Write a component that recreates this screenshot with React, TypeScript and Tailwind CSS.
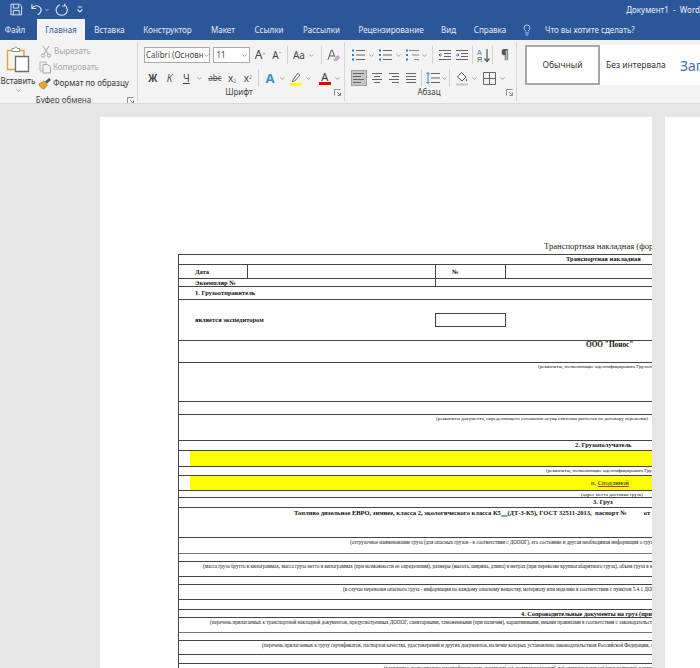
import React from 'react';
import { ChevronDown, Lightbulb } from 'lucide-react';

const tabs = [
  { label: 'Файл', w: 'w-[30px]' },
  { label: 'Главная', w: 'w-[48px]', active: true },
  { label: 'Вставка', w: 'w-[49px]' },
  { label: 'Конструктор', w: 'w-[67px]' },
  { label: 'Макет', w: 'w-[44px]' },
  { label: 'Ссылки', w: 'w-[48px]' },
  { label: 'Рассылки', w: 'w-[57px]' },
  { label: 'Рецензирование', w: 'w-[82px]' },
  { label: 'Вид', w: 'w-[33px]' },
  { label: 'Справка', w: 'w-[50px]' },
];

const Chev = ({ className = '' }: { className?: string }) => (
  <ChevronDown className={`w-[7px] h-[7px] text-[#666] ${className}`} strokeWidth={2} />
);

const Vr = ({ className = '' }: { className?: string }) => <div className={`w-px h-[18px] bg-[#d2d2d2] ${className}`} />;

// paragraph style glyph: horizontal lines given as [x1, x2]
const Lines = ({ rows, color = '#666', extra }: { rows: number[][]; color?: string; extra?: React.ReactNode }) => (
  <svg width="14" height="14" viewBox="0 0 14 14" className="shrink-0">
    {rows.map((r, i) => (
      <line key={i} x1={r[0]} x2={r[1]} y1={2.5 + (i * 9) / Math.max(rows.length - 1, 1)} y2={2.5 + (i * 9) / Math.max(rows.length - 1, 1)} stroke={color} strokeWidth="1" />
    ))}
    {extra}
  </svg>
);

const Launcher = () => (
  <svg width="7" height="7" viewBox="0 0 7 7" className="shrink-0">
    <path d="M0.5 6.5V0.5H6.5M3 3L6.5 6.5M6.5 3.5V6.5H3.5" fill="none" stroke="#777" strokeWidth="0.8" />
  </svg>
);

const GroupLabel = ({ label }: { label: string }) => (
  <div className="flex items-center justify-between h-[14px] mt-auto mb-[3px]">
    <div className="flex-1 text-center text-[8px] text-[#444] whitespace-nowrap">{label}</div>
    <Launcher />
  </div>
);

const Clipboard = () => (
  <div className="mt-[4px]">
    <svg width="24" height="28" viewBox="0 0 24 28">
      <path d="M1.5 4.5H18V10M1.5 4.5V23.5H9" fill="#fbf3e3" stroke="#d9a441" strokeWidth="1.4" />
      <path d="M6 5.5V2.5H8C8.5 .5 11 .5 11.5 2.5H13.5V5.5Z" fill="#fff" stroke="#8a8a8a" strokeWidth="1" />
      <path d="M9.5 10.5H22.5V25.5H9.5Z" fill="#fff" stroke="#6f6f6f" strokeWidth="1.3" />
    </svg>
  </div>
);

const ClipboardGroup = () => (
  <div className="w-[138px] shrink-0 border-r border-[#d6d6d6] flex flex-col pr-[3px] my-[2px]">
    <div className="flex">
      <div className="w-[36px] flex flex-col items-center">
        <Clipboard />
        <div className="text-[8px] leading-[11px] mt-[1px] text-[#333] whitespace-nowrap">Вставить</div>
        <Chev className="mt-[1px]" />
      </div>
      <div className="flex flex-col ml-[2px] mt-[1px] text-[8px] leading-[16px] whitespace-nowrap">
        <div className="flex items-center h-[16px] text-[#a8a8a8]">
          <svg width="12" height="13" viewBox="0 0 12 13" className="ml-[2px] mr-[2px]">
            <path d="M3 1L8 9M9 1L4 9" fill="none" stroke="#a5a5a5" strokeWidth="1" />
            <circle cx="3" cy="10.5" r="1.6" fill="none" stroke="#8fa6c4" />
            <circle cx="9" cy="10.5" r="1.6" fill="none" stroke="#8fa6c4" />
          </svg>
          Вырезать
        </div>
        <div className="flex items-center h-[16px] text-[#a8a8a8]">
          <svg width="13" height="13" viewBox="0 0 13 13" className="ml-[1px] mr-[1px]">
            <path d="M1 1H7V10H1Z" fill="none" stroke="#b0b0b0" />
            <path d="M4 3.5H8.5L11.5 6V12H4Z" fill="#f3f3f3" stroke="#a5a5a5" />
          </svg>
          Копировать
        </div>
        <div className="flex items-center h-[16px] text-[#333]">
          <svg width="14" height="13" viewBox="0 0 14 13" className="mr-[1px]">
            <path d="M1 7L6 4L9.5 8L6 12C4 12 1.5 10 1 7Z" fill="#e8a33d" stroke="#b5721f" strokeWidth="0.7" />
            <path d="M7 4.5L11 1L13 3L9 6.5Z" fill="#555" />
          </svg>
          Формат по образцу
        </div>
      </div>
    </div>
    <GroupLabel label="Буфер обмена" />
  </div>
);

const FontGroup = () => (
  <div className="w-[207px] shrink-0 border-r border-[#d6d6d6] flex flex-col pl-[6px] pr-[3px] my-[2px] text-[#444]">
    <div className="flex items-center mt-[5px] h-[16px]">
      <div className="w-[68px] h-[16px] bg-white border border-[#aaa] flex items-center pl-[1px] overflow-hidden">
        <span className="text-[8px] whitespace-nowrap w-[57px] overflow-hidden">Calibri (Основн</span>
        <Chev />
      </div>
      <div className="w-[37px] h-[16px] ml-[3px] bg-white border border-[#aaa] flex items-center justify-between pl-[2px] pr-[1px]">
        <span className="text-[8px]">11</span>
        <Chev />
      </div>
      <span className="ml-[5px] text-[12px] leading-none w-[18px]">A<sup className="text-[6px] text-[#4a7ab5]">^</sup></span>
      <span className="text-[10px] leading-none w-[15px]">A<sup className="text-[6px] text-[#4a7ab5]">ˇ</sup></span>
      <Vr />
      <span className="ml-[5px] text-[10px] w-[15px]">Aa</span>
      <Chev />
      <Vr className="ml-[7px]" />
      <svg width="14" height="14" viewBox="0 0 14 14" className="ml-[5px]">
        <path d="M1 12L4.5 2H5.5L8 9M2.5 8H7" fill="none" stroke="#555" />
        <path d="M7 12L11 7.5L13 9.5L10 12.5H7.5Z" fill="#d9a8e0" stroke="#a55bb5" strokeWidth="0.6" />
      </svg>
    </div>
    <div className="flex items-center mt-[7px] h-[16px]">
      <span className="w-[14px] ml-[2px] text-center text-[10px] font-bold font-['Liberation_Sans',sans-serif]">Ж</span>
      <span className="w-[20px] text-center text-[10px] italic text-[#555]">К</span>
      <span className="w-[14px] text-center text-[10px] underline">Ч</span>
      <Chev className="ml-[3px]" />
      <span className="w-[20px] ml-[2px] text-center text-[8px] text-[#555] line-through">abc</span>
      <span className="w-[15px] text-center text-[10px]">x<sub className="text-[5px] text-[#4a7ab5]">2</sub></span>
      <span className="w-[17px] text-center text-[10px]">x<sup className="text-[5px] text-[#4a7ab5]">2</sup></span>
      <Vr className="ml-[2px]" />
      <span className="w-[18px] ml-[2px] text-center text-[13px] leading-none font-bold text-[#3f8fd6]">A</span>
      <Chev />
      <svg width="14" height="15" viewBox="0 0 14 15" className="ml-[3px]">
        <path d="M4 9L9 2L11 4L6 10L3.5 10.5Z" fill="#fff" stroke="#666" />
        <rect x="1" y="12" width="12" height="3" fill="#ffff00" />
      </svg>
      <Chev className="ml-[3px]" />
      <div className="ml-[6px] w-[13px] flex flex-col items-center">
        <span className="text-[11px] leading-[11px] text-[#333]">A</span>
        <div className="w-[12px] h-[3px] bg-[#e00000]" />
      </div>
      <Chev className="ml-[3px]" />
    </div>
    <GroupLabel label="Шрифт" />
  </div>
);

const bullets = (
  <g fill="#2b7cd3">
    <rect x="0" y="1.5" width="2" height="2" />
    <rect x="0" y="6" width="2" height="2" />
    <rect x="0" y="10.5" width="2" height="2" />
  </g>
);

const ParagraphGroup = () => (
  <div className="w-[172px] shrink-0 border-r border-[#d6d6d6] flex flex-col pl-[7px] pr-[3px] my-[2px]">
    <div className="flex items-center mt-[5px] h-[16px]">
      <Lines rows={[[4, 13], [4, 13], [4, 13]]} extra={bullets} />
      <Chev className="ml-[2px]" />
      <div className="ml-[4px]"><Lines rows={[[4, 13], [4, 13], [4, 13]]} extra={bullets} /></div>
      <Chev className="ml-[2px]" />
      <div className="ml-[4px]"><Lines rows={[[3, 13], [6, 13], [8, 13]]} color="#888" extra={bullets} /></div>
      <Chev className="ml-[1px]" />
      <Vr className="ml-[4px]" />
      <div className="ml-[5px]"><Lines rows={[[1, 13], [6, 13], [6, 13], [1, 13]]} extra={<path d="M4 7H1M2.5 5.5L1 7L2.5 8.5" fill="none" stroke="#2b7cd3" />} /></div>
      <div className="ml-[3px]"><Lines rows={[[1, 13], [6, 13], [6, 13], [1, 13]]} extra={<path d="M1 7H4M2.5 5.5L4 7L2.5 8.5" fill="none" stroke="#2b7cd3" />} /></div>
      <Vr className="ml-[3px]" />
      <svg width="14" height="15" viewBox="0 0 14 15" className="ml-[3px]">
        <path d="M11 1V13M8.5 10.5L11 13.5L13.5 10.5" fill="none" stroke="#555" strokeWidth="1.2" />
        <text x="1" y="6.5" fontSize="7" fill="#2b7cd3" fontFamily="Liberation Sans, sans-serif">А</text>
        <text x="1" y="13.5" fontSize="7" fill="#555" fontFamily="Liberation Sans, sans-serif">Я</text>
      </svg>
      <Vr className="ml-[2px]" />
      <span className="ml-[8px] text-[12px] font-bold leading-none text-[#555]">¶</span>
    </div>
    <div className="flex items-center mt-[7px] h-[16px] -ml-[1px]">
      <div className="w-[16px] h-[16px] bg-[#c6c6c6] border border-[#a0a0a0] flex items-center justify-center">
        <Lines rows={[[1, 12], [1, 9], [1, 12], [1, 9]]} />
      </div>
      <div className="ml-[3px]"><Lines rows={[[2, 12], [4, 10], [2, 12], [4, 10]]} /></div>
      <div className="ml-[3px]"><Lines rows={[[2, 12], [5, 12], [2, 12], [5, 12]]} /></div>
      <div className="ml-[3px]"><Lines rows={[[2, 12], [2, 12], [2, 12], [2, 12]]} /></div>
      <Vr className="ml-[3px]" />
      <div className="ml-[4px]"><Lines rows={[[5, 14], [5, 14], [5, 14]]} extra={<path d="M2 1.5V12.5M.5 3L2 1.5L3.5 3M.5 11L2 12.5L3.5 11" fill="none" stroke="#2b7cd3" />} /></div>
      <Chev className="ml-[1px]" />
      <Vr className="ml-[1px]" />
      <svg width="14" height="15" viewBox="0 0 14 15" className="ml-[5px]">
        <path d="M6.5 1.5L11 6L7 10L2.5 6Z" fill="#fff" stroke="#555" />
        <path d="M11.5 7.5C12.5 9 12.5 10 11.5 10C10.5 10 10.5 9 11.5 7.5Z" fill="#555" />
        <rect x="1" y="12.5" width="12" height="2" fill="#c8c8c8" />
      </svg>
      <Chev className="ml-[2px]" />
      <svg width="13" height="13" viewBox="0 0 13 13" className="ml-[5px]">
        <path d="M.5 .5H12.5V12.5H.5ZM6.5 .5V12.5M.5 6.5H12.5" fill="none" stroke="#666" />
      </svg>
      <Chev className="ml-[3px]" />
    </div>
    <GroupLabel label="Абзац" />
  </div>
);

const StylesGroup = () => (
  <div className="flex items-start ml-[8px] mt-[5px] text-[#333]">
    <div className="w-[75px] h-[40px] bg-white border-2 border-[#a9a9a9] flex items-center justify-center text-[8.5px]">Обычный</div>
    <div className="w-[80px] h-[40px] bg-white flex items-center pl-[6px] text-[8.5px] whitespace-nowrap">Без интервала</div>
    <div className="w-[30px] h-[40px] bg-white flex items-center text-[14px] text-[#4472a8] whitespace-nowrap overflow-hidden">Заг</div>
  </div>
);

type Row = { h: number; x?: number; text?: string; size?: number; bold?: boolean; yellow?: boolean; center?: boolean; body?: string; thick?: boolean };

const rows: Row[] = [
  { h: 10, x: 388, text: 'Транспортная накладная', size: 6.5, bold: true },
  { h: 14, body: 'date' },
  { h: 8, body: 'copy' },
  { h: 13, x: 17, text: '1. Грузоотправитель', size: 6.5, bold: true, center: true },
  { h: 41, body: 'forwarder' },
  { h: 22, x: 408, text: 'ООО "Понос"', size: 7.3, bold: true },
  { h: 39, x: 360, text: '(реквизиты, позволяющие идентифицировать Грузоотправителя)', size: 5 },
  { h: 13 },
  { h: 26, x: 258, text: '(реквизиты документа, определяющего основания осуществления расчетов по договору перевозки)', size: 5 },
  { h: 10, x: 397, text: '2. Грузополучатель', size: 6.5, bold: true },
  { h: 16, yellow: true },
  { h: 9, x: 368, text: '(реквизиты, позволяющие идентифицировать Грузополучателя)', size: 5 },
  { h: 15, yellow: true, body: 'address' },
  { h: 7, x: 403, text: '(адрес места доставки груза)', size: 5 },
  { h: 10, x: 415, text: '3. Груз', size: 6.5, bold: true },
  { h: 30, body: 'cargo' },
  { h: 16, x: 172, text: '(отгрузочное наименование груза (для опасных грузов - в соответствии с ДОПОГ), его состояние и другая необходимая информация о грузе)', size: 5.1 },
  { h: 8, thick: true },
  { h: 15, x: 25, text: '(масса груза брутто в килограммах, масса груза нетто в килограммах (при возможности ее определения), размеры (высота, ширина, длина) в метрах (при перевозке крупногабаритного груза), объем груза в кубических метрах', size: 5.1 },
  { h: 8 },
  { h: 15, x: 165, text: '(в случае перевозки опасного груза - информация по каждому опасному веществу, материалу или изделию в соответствии с пунктом 5.4.1 ДОПОГ)', size: 5.1 },
  { h: 10 },
  { h: 8, x: 343, text: '4. Сопроводительные документы на груз (при наличии)', size: 6.3, bold: true },
  { h: 15, x: 32, text: '(перечень прилагаемых к транспортной накладной документов, предусмотренных ДОПОГ, санитарными, таможенными (при наличии), карантинными, иными правилами в соответствии с законодательством Российской Федерации)', size: 5.1 },
  { h: 8, thick: true },
  { h: 14, x: 84, text: '(перечень прилагаемых к грузу сертификатов, паспортов качества, удостоверений и других документов, наличие которых установлено законодательством Российской Федерации, либо регистрационные номера)', size: 5.1 },
  { h: 9 },
  { h: 20, x: 206, text: '(реквизиты, позволяющие идентифицировать документ(-ы), подтверждающий(-ие) отгрузку товаров) (при наличии), реквизиты сертификата', size: 5.1 },
];

const cellText = 'text-[6.5px] font-bold leading-[8px]';

const renderBody = (r: Row) => {
  if (r.body === 'date')
    return (
      <div className="flex h-full items-center">
        <div className={`w-[68px] pl-[16px] h-full flex items-center ${cellText}`}>Дата</div>
        <div className="w-[188px] h-full border-l border-[#444]" />
        <div className={`w-[70px] h-full border-l border-[#444] pl-[16px] flex items-center ${cellText}`}>№</div>
        <div className="flex-1 h-full border-l border-[#444]" />
      </div>
    );
  if (r.body === 'copy')
    return (
      <div className="flex h-full">
        <div className={`w-[256px] pl-[16px] ${cellText}`}>Экземпляр №</div>
        <div className="flex-1 h-full border-l border-[#444]" />
      </div>
    );
  if (r.body === 'forwarder')
    return (
      <div className="flex h-full items-center pb-[1px]">
        <div className={`w-[256px] pl-[16px] ${cellText}`}>является экспедитором</div>
        <div className="w-[71px] h-[14px] border border-[#444]" />
      </div>
    );
  if (r.body === 'address')
    return (
      <div className="pl-[412px] text-[6.5px] leading-[14px] whitespace-nowrap text-[#111]">
        п. <span className="underline decoration-[#c0392b]">Сподлиной</span>
      </div>
    );
  if (r.body === 'cargo')
    return (
      <div className="pl-[115px] text-[6.5px] font-bold leading-[9px] whitespace-nowrap text-[#111]">
        Топливо дизельное ЕВРО, зимнее, класса 2, экологического класса К5<span className="underline decoration-[#7fa3d1]">__</span>(ДТ-3-К5), ГОСТ 32511-2013,&nbsp; паспорт №<span className="pl-[17px]">от</span>
      </div>
    );
  return null;
};

const DocTable = () => (
  <div className="w-[480px] ml-[78px] border-l border-[#444] text-[#111]">
    {rows.map((r, i) => (
      <div
        key={i}
        style={{ height: r.h }}
        className={`box-border border-t ${r.thick ? 'border-[#777]' : 'border-[#444]'} overflow-hidden ${r.yellow ? 'pl-[11px]' : ''}`}
      >
        <div className={`h-full ${r.yellow ? 'bg-[#ffff00]' : ''}`}>
          {r.body ? (
            <div className={r.yellow ? '-ml-[11px]' : 'h-full'}>{renderBody(r)}</div>
          ) : r.text ? (
            <div
              style={{ paddingLeft: (r.x ?? 1) - 1, fontSize: r.size }}
              className={`whitespace-nowrap leading-[8px] ${r.bold ? 'font-bold' : ''} ${r.center ? 'pt-[2px]' : ''}`}
            >
              {r.text}
            </div>
          ) : null}
        </div>
      </div>
    ))}
  </div>
);

export default function App() {
  return (
    <div className="w-[700px] h-[668px] overflow-hidden bg-[#e6e6e6] flex flex-col font-['Noto_Sans',sans-serif]">
      <div className="h-[19px] shrink-0 bg-[#2b579a] flex items-center text-white">
        <svg width="13" height="13" viewBox="0 0 13 13" className="ml-[10px]">
          <path d="M1 1H10L12 3V12H1ZM3.5 1V5H9V1M3.5 12V7.5H9.5V12" fill="none" stroke="#dfe7f3" />
        </svg>
        <svg width="14" height="13" viewBox="0 0 14 13" className="ml-[6px]">
          <path d="M3 1V5.5H7.5M3 5.5C5 2 10 1.5 12 5C13.3 7.5 12 10.5 9 12" fill="none" stroke="#dfe7f3" strokeWidth="1.2" />
        </svg>
        <ChevronDown className="w-[6px] h-[6px] ml-[2px] text-[#dfe7f3]" strokeWidth={2.5} />
        <svg width="14" height="14" viewBox="0 0 14 14" className="ml-[5px]">
          <path d="M5 1.5C1.5 3 .3 6.5 1.8 9.5C3.5 13 9 13.5 11.5 10.5C13.5 8 13 4 10 2M10 .5V2.5L7.5 3" fill="none" stroke="#dfe7f3" strokeWidth="1.1" />
        </svg>
        <svg width="6" height="7" viewBox="0 0 6 7" className="ml-[9px]">
          <path d="M1 1H5M.5 3.5L3 6L5.5 3.5" fill="none" stroke="#dfe7f3" strokeWidth="1.1" />
        </svg>
        <span className="ml-[543px] text-[8px] whitespace-nowrap text-[#eef2f8]">Документ1&nbsp; -&nbsp; Word</span>
      </div>
      <div className="h-[21px] shrink-0 bg-[#2b579a] flex items-stretch text-[8px] text-[#e6ecf5]">
        {tabs.map((t) => (
          <div
            key={t.label}
            className={`${t.w} flex items-center justify-center shrink-0 whitespace-nowrap ${t.active ? 'bg-[#f3f3f3] text-[#2b579a] ml-[7px]' : ''}`}
          >
            {t.label}
          </div>
        ))}
        <Lightbulb className="w-[12px] h-[12px] ml-[6px] self-center text-[#e6ecf5]" strokeWidth={1.5} />
        <span className="ml-[12px] self-center whitespace-nowrap">Что вы хотите сделать?</span>
      </div>
      <div className="h-[64px] shrink-0 bg-[#f3f3f3] border-b border-[#d8d8d8] flex overflow-hidden">
        <ClipboardGroup />
        <FontGroup />
        <ParagraphGroup />
        <StylesGroup />
      </div>
      <div className="flex pl-[100px] pt-[13px] gap-[13px] flex-1 overflow-hidden">
        <div className="w-[552px] shrink-0 bg-white pt-[122px] overflow-hidden font-['Liberation_Serif',serif]">
          <div className="pl-[444px] text-[8.6px] leading-[15px] whitespace-nowrap text-[#222]">Транспортная накладная (форма)</div>
          <DocTable />
        </div>
        <div className="w-[300px] shrink-0 bg-white" />
      </div>
    </div>
  );
}
